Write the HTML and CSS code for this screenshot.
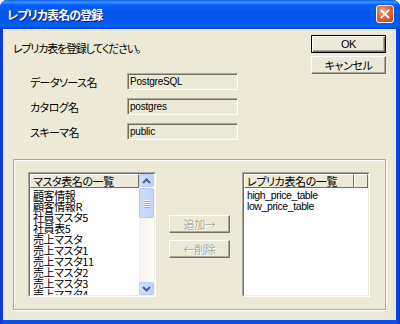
FILE: index.html
```html
<!DOCTYPE html>
<html lang="ja">
<head>
<meta charset="utf-8">
<link rel="stylesheet" href="styles.css">
</head>
<body>
<div class="window">
  <div class="titlebar">
    <span class="title">レプリカ表名の登録</span>
    <span class="close"><svg width="18" height="18" viewBox="0 0 18 18"><path d="M5 5 L13 13 M13 5 L5 13" stroke="#fff" stroke-width="2" stroke-linecap="square"/></svg></span>
  </div>
  <div class="client">
    <div class="top">
      <div class="left">
        <div class="msg">レプリカ表を登録してください。</div>
        <div class="form">
          <div class="row"><span class="label">データソース名</span><span class="field en">PostgreSQL</span></div>
          <div class="row"><span class="label">カタログ名</span><span class="field en">postgres</span></div>
          <div class="row"><span class="label">スキーマ名</span><span class="field en">public</span></div>
        </div>
      </div>
      <div class="buttons">
        <button class="btn default en">OK</button>
        <button class="btn">キャンセル</button>
      </div>
    </div>
    <div class="group">
      <div class="listbox">
        <div class="lb-inner">
          <div class="lb-main">
            <div class="header"><span class="hcell full">マスタ表名の一覧</span></div>
            <ul class="items">
              <li>顧客情報</li>
              <li>顧客情報R</li>
              <li>社員マスタ5</li>
              <li>社員表5</li>
              <li>売上マスタ</li>
              <li>売上マスタ1</li>
              <li>売上マスタ11</li>
              <li>売上マスタ2</li>
              <li>売上マスタ3</li>
              <li>売上マスタ4</li>
            </ul>
          </div>
          <div class="scrollbar">
            <div class="sb-btn"><svg width="9" height="6" viewBox="0 0 9 6"><path d="M1 5 L4.5 1.5 L8 5" fill="none" stroke="#4D6185" stroke-width="2"/></svg></div>
            <div class="track">
              <div class="thumb"><span class="grip"></span><span class="grip"></span><span class="grip"></span><span class="grip"></span></div>
            </div>
            <div class="sb-btn"><svg width="9" height="6" viewBox="0 0 9 6"><path d="M1 1 L4.5 4.5 L8 1" fill="none" stroke="#4D6185" stroke-width="2"/></svg></div>
          </div>
        </div>
      </div>
      <div class="mid">
        <button class="btn disabled">追加→</button>
        <button class="btn disabled">←削除</button>
      </div>
      <div class="listbox">
        <div class="lb-inner">
          <div class="lb-main">
            <div class="header"><span class="hcell wide">レプリカ表名の一覧</span><span class="hcell rest"></span></div>
            <ul class="items">
              <li class="en">high_price_table</li>
              <li class="en">low_price_table</li>
            </ul>
          </div>
        </div>
      </div>
    </div>
  </div>
</div>
</body>
</html>
```
FILE: styles.css
```css
html, body {
  margin: 0;
  padding: 0;
  background: #fff;
}
body {
  font-family: "Noto Sans CJK JP", "Liberation Sans", sans-serif;
  font-size: 11px;
  font-feature-settings: "palt";
  letter-spacing: -0.4px;
  color: #000;
}
.en {
  font-family: "Liberation Sans", "Noto Sans CJK JP", sans-serif;
  font-size: 10px;
  letter-spacing: -0.2px;
}
.window {
  width: 400px;
  height: 324px;
  display: flex;
  flex-direction: column;
  background: linear-gradient(to right, #0831D9 0%, #0A50E8 1%, #0A50E8 99%, #0831D9 100%);
  border-radius: 7px 7px 0 0;
  overflow: hidden;
}
.titlebar {
  height: 29px;
  flex: none;
  display: flex;
  align-items: center;
  justify-content: space-between;
  padding: 0 6px 0 7px;
  background: linear-gradient(to bottom, #0A5FE8 0%, #3D95FF 8%, #0A61FF 16%, #0055EA 40%, #0058EE 70%, #0062F7 88%, #0052E0 95%, #003FC8 100%);
}
.title {
  color: #fff;
  font-weight: bold;
  font-size: 12px;
  letter-spacing: -0.9px;
  text-shadow: 1px 1px 0 #0A1E6E;
}
.close {
  width: 16px;
  height: 16px;
  border: 1px solid #fff;
  border-radius: 3px;
  background: radial-gradient(circle at 35% 30%, #F0A58A 0%, #E0653F 45%, #C23E14 100%);
  display: flex;
  align-items: center;
  justify-content: center;
  margin-top: -1px;
}
.close svg {
  width: 16px;
  height: 16px;
}
.client {
  flex: 1;
  margin: 0 4px 4px 3px;
  background: #ECE9D8;
  padding: 6px 10px 0 10px;
  display: flex;
  flex-direction: column;
}
.top {
  display: flex;
  justify-content: space-between;
  align-items: flex-start;
}
.msg {
  margin-top: 6px;
  height: 14px;
  line-height: 14px;
  letter-spacing: -1.2px;
}
.form {
  margin-top: 18px;
  display: flex;
  flex-direction: column;
  gap: 8px;
}
.row {
  display: flex;
  align-items: center;
  height: 17px;
}
.label {
  width: 97px;
  padding-left: 17px;
  letter-spacing: -0.6px;
}
.field {
  width: 107px;
  height: 13px;
  line-height: 13px;
  padding-left: 2px;
  border: 1px solid;
  border-color: #ACA899 #FFF #FFF #ACA899;
  box-shadow: inset 1px 1px 0 #716F64, inset -1px -1px 0 #F1EFE2;
  padding-top: 1px;
  padding-bottom: 1px;
  background: #ECE9D8;
}
.buttons {
  display: flex;
  flex-direction: column;
  gap: 3px;
}
.btn {
  font-family: "Noto Sans CJK JP", "Liberation Sans", sans-serif;
  font-size: 11px;
  font-feature-settings: "palt";
  letter-spacing: -0.4px;
  width: 75px;
  height: 18px;
  padding: 0;
  margin: 0;
  background: #ECE9D8;
  color: #000;
  border: 1px solid;
  border-color: #FFF #716F64 #716F64 #FFF;
  box-shadow: inset -1px -1px 0 #ACA899;
  line-height: 14px;
}
.btn.en {
  font-family: "Liberation Sans", sans-serif;
  font-size: 11px;
}
.btn.default {
  border: 1px solid #000;
  box-shadow: inset 1px 1px 0 #FFF, inset -1px -1px 0 #716F64, inset -2px -2px 0 #ACA899;
}
.btn.disabled {
  width: 61px;
  color: #ACA899;
  text-shadow: 1px 1px 0 #FFF;
}
.group {
  margin-top: 19px;
  height: 151px;
  box-sizing: border-box;
  border: 1px solid #ACA899;
  box-shadow: inset 1px 1px 0 #FFF, 1px 1px 0 #FFF;
  display: flex;
  align-items: flex-start;
  padding: 12px 15px 0 14px;
}
.listbox {
  width: 128px;
  height: 125px;
  box-sizing: border-box;
  border: 1px solid;
  border-color: #ACA899 #FFF #FFF #ACA899;
  flex: none;
}
.lb-inner {
  height: 100%;
  box-sizing: border-box;
  border: 1px solid;
  border-color: #716F64 #F1EFE2 #F1EFE2 #716F64;
  background: #fff;
  display: flex;
}
.lb-main {
  flex: 1;
  min-width: 0;
  overflow: hidden;
  display: flex;
  flex-direction: column;
}
.header {
  height: 14px;
  display: flex;
  flex: none;
  position: relative;
  z-index: 1;
}
.hcell {
  box-sizing: border-box;
  height: 14px;
  line-height: 12px;
  background: #ECE9D8;
  border: 1px solid;
  border-color: #FFF #716F64 #716F64 #FFF;
  padding-left: 2px;
  white-space: nowrap;
  overflow: hidden;
}
.hcell.full { flex: 1; }
.hcell.wide { width: 110px; flex: none; }
.hcell.rest { flex: 1; }
.items {
  list-style: none;
  margin: 0;
  padding: 2px 0 0 3px;
  overflow: hidden;
  flex: 1;
}
.items li {
  height: 11px;
  line-height: 11px;
  white-space: nowrap;
}
.items li.en {
  font-size: 10.5px;
  letter-spacing: -0.4px;
}
.scrollbar {
  width: 15px;
  flex: none;
  display: flex;
  flex-direction: column;
  background: linear-gradient(to right, #F3F1EC, #FEFEFB);
}
.sb-btn {
  height: 13px;
  box-sizing: border-box;
  border: 1px solid #B6CCF7;
  border-radius: 2px;
  background: linear-gradient(to right, #D4E1FC, #BCD0FA);
  display: flex;
  align-items: center;
  justify-content: center;
  flex: none;
}
.track {
  flex: 1;
  padding-top: 1px;
}
.thumb {
  height: 30px;
  box-sizing: border-box;
  border: 1px solid #B4C8F6;
  border-radius: 2px;
  background: linear-gradient(to right, #D0DDFC, #C1D3FB);
  display: flex;
  flex-direction: column;
  align-items: center;
  justify-content: center;
  gap: 1px;
}
.grip {
  width: 6px;
  height: 1px;
  background: #EEF4FE;
  box-shadow: 0 1px 0 #8CB0F8;
}
.mid {
  display: flex;
  flex-direction: column;
  gap: 7px;
  margin: 43px 12px 0 13px;
}
```
